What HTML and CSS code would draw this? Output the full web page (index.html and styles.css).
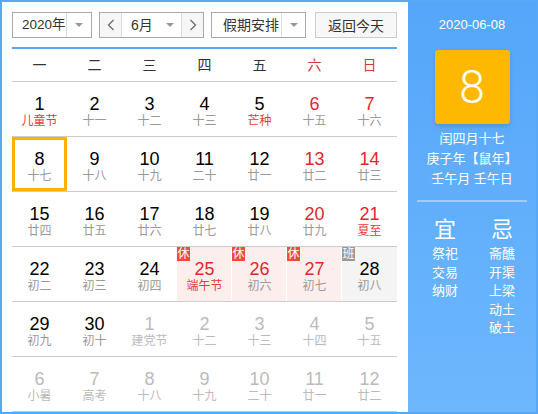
FILE: index.html
```html
<!DOCTYPE html>
<html lang="zh-CN">
<head>
<meta charset="utf-8">
<title>万年历</title>
<link rel="stylesheet" href="styles.css">
</head>
<body>
<div class="calendar">
  <div class="main">
    <div class="toolbar">
      <div class="select year">
        <span class="val">2020年</span>
        <span class="drop"><i class="arrow"></i></span>
      </div>
      <div class="select month">
        <span class="btn prev"><svg width="8" height="12" viewBox="0 0 8 12"><polyline points="6.5,1 1.5,6 6.5,11" fill="none" stroke="#666" stroke-width="1.2"/></svg></span>
        <span class="val">6月</span>
        <span class="mdrop"><i class="arrow"></i></span>
        <span class="btn next"><svg width="8" height="12" viewBox="0 0 8 12"><polyline points="1.5,1 6.5,6 1.5,11" fill="none" stroke="#666" stroke-width="1.2"/></svg></span>
      </div>
      <div class="select holiday">
        <span class="val">假期安排</span>
        <span class="drop"><i class="arrow"></i></span>
      </div>
      <button class="today">返回今天</button>
    </div>
    <div class="week">
      <span>一</span><span>二</span><span>三</span><span>四</span><span>五</span><span class="red">六</span><span class="red">日</span>
    </div>
    <div class="days">
      <div class="day"><b>1</b><em class="fest">儿童节</em></div>
      <div class="day"><b>2</b><em>十一</em></div>
      <div class="day"><b>3</b><em>十二</em></div>
      <div class="day"><b>4</b><em>十三</em></div>
      <div class="day"><b>5</b><em class="fest">芒种</em></div>
      <div class="day wkend"><b>6</b><em>十五</em></div>
      <div class="day wkend"><b>7</b><em>十六</em></div>

      <div class="day selected"><b>8</b><em>十七</em></div>
      <div class="day"><b>9</b><em>十八</em></div>
      <div class="day"><b>10</b><em>十九</em></div>
      <div class="day"><b>11</b><em>二十</em></div>
      <div class="day"><b>12</b><em>廿一</em></div>
      <div class="day wkend"><b>13</b><em>廿二</em></div>
      <div class="day wkend"><b>14</b><em>廿三</em></div>

      <div class="day"><b>15</b><em>廿四</em></div>
      <div class="day"><b>16</b><em>廿五</em></div>
      <div class="day"><b>17</b><em>廿六</em></div>
      <div class="day"><b>18</b><em>廿七</em></div>
      <div class="day"><b>19</b><em>廿八</em></div>
      <div class="day wkend"><b>20</b><em>廿九</em></div>
      <div class="day wkend"><b>21</b><em class="fest">夏至</em></div>

      <div class="day"><b>22</b><em>初二</em></div>
      <div class="day"><b>23</b><em>初三</em></div>
      <div class="day"><b>24</b><em>初四</em></div>
      <div class="day rest"><i class="badge">休</i><b>25</b><em class="fest">端午节</em></div>
      <div class="day rest"><i class="badge">休</i><b>26</b><em>初六</em></div>
      <div class="day rest"><i class="badge">休</i><b>27</b><em>初七</em></div>
      <div class="day work"><i class="badge">班</i><b>28</b><em>初八</em></div>

      <div class="day"><b>29</b><em>初九</em></div>
      <div class="day"><b>30</b><em>初十</em></div>
      <div class="day other"><b>1</b><em>建党节</em></div>
      <div class="day other"><b>2</b><em>十二</em></div>
      <div class="day other"><b>3</b><em>十三</em></div>
      <div class="day other"><b>4</b><em>十四</em></div>
      <div class="day other"><b>5</b><em>十五</em></div>

      <div class="day other"><b>6</b><em>小暑</em></div>
      <div class="day other"><b>7</b><em>高考</em></div>
      <div class="day other"><b>8</b><em>十八</em></div>
      <div class="day other"><b>9</b><em>十九</em></div>
      <div class="day other"><b>10</b><em>二十</em></div>
      <div class="day other"><b>11</b><em>廿一</em></div>
      <div class="day other"><b>12</b><em>廿二</em></div>
    </div>
  </div>
  <div class="side">
    <div class="date">2020-06-08</div>
    <div class="bigday">8</div>
    <div class="lunar">
      <div>闰四月十七</div>
      <div>庚子年【鼠年】</div>
      <div>壬午月 壬午日</div>
    </div>
    <div class="sep"></div>
    <div class="yiji">
      <div class="col">
        <div class="head">宜</div>
        <div>祭祀</div>
        <div>交易</div>
        <div>纳财</div>
      </div>
      <div class="col">
        <div class="head">忌</div>
        <div>斋醮</div>
        <div>开渠</div>
        <div>上梁</div>
        <div>动土</div>
        <div>破土</div>
      </div>
    </div>
  </div>
</div>
</body>
</html>
```
FILE: styles.css
```css
* { box-sizing: border-box; }
html, body { margin: 0; padding: 0; }
body {
  width: 538px;
  height: 414px;
  overflow: hidden;
  font-family: "Liberation Sans", "Noto Sans CJK SC", sans-serif;
  color: #333;
}
.calendar {
  display: flex;
  width: 538px;
  height: 414px;
  border: 2px solid #58a8f8;
  background: #fff;
  overflow: hidden;
}
.main {
  width: 406px;
  padding: 10px 11px 0 10px;
  overflow: hidden;
}
.toolbar {
  display: flex;
  height: 26px;
  margin-bottom: 9px;
}
.select {
  display: flex;
  height: 26px;
  border: 1px solid #aaa;
  background: #fff;
  font-size: 14px;
  line-height: 24px;
  color: #333;
  white-space: nowrap;
}
.select .val { flex: 1; padding-left: 10px; white-space: nowrap; overflow: hidden; }
.select .drop {
  display: flex;
  align-items: center;
  justify-content: center;
  flex: none;
  border-left: 1px solid #ddd;
}
.arrow {
  display: block;
  width: 0;
  height: 0;
  border-left: 4px solid transparent;
  border-right: 4px solid transparent;
  border-top: 4px solid #999;
}
.year { width: 80px; }
.year .val { padding-left: 9px; font-size: 13.5px; }
.year .drop { width: 25px; }
.month { width: 105px; margin-left: 7px; }
.month .btn {
  display: flex;
  align-items: center;
  justify-content: center;
  flex: none;
  width: 22px;
  background: #f6f6f6;
}
.month .prev { border-right: 1px solid #ddd; }
.month .next { border-left: 1px solid #ddd; }
.month .val { padding-left: 9px; }
.month .mdrop { display: flex; align-items: center; padding-right: 7px; }
.holiday { width: 95px; margin-left: 7px; }
.holiday .val { padding-left: 11px; }
.holiday .drop { width: 24px; }
.today {
  width: 82px;
  height: 26px;
  margin-left: 9px;
  padding: 0;
  border: 1px solid #ccc;
  background: #f7f7f7;
  font-family: "Liberation Sans", "Noto Sans CJK SC", sans-serif;
  font-size: 14px;
  color: #333;
}
.week {
  display: grid;
  grid-template-columns: repeat(7, 55px);
  border-top: 2px solid #58a8f8;
  border-bottom: 1px solid #ccc;
  height: 35px;
  font-size: 14px;
  line-height: 32px;
  text-align: center;
  color: #333;
}
.week .red { color: #e0333a; }
.days {
  display: grid;
  grid-template-columns: repeat(7, 55px);
  grid-auto-rows: 55px;
}
.day {
  position: relative;
  display: flex;
  flex-direction: column;
  align-items: center;
  padding-top: 12px;
  border-bottom: 1px solid #ccc;
}
.day b {
  font-weight: normal;
  font-size: 18px;
  line-height: 20px;
  color: #000;
}
.day em {
  font-style: normal;
  font-size: 12px;
  line-height: 14px;
  color: #999;
}
.day em.fest { color: #e63a3a; }
.day.wkend b { color: #e3262e; }
.day.rest { background: #fdeeee; box-shadow: inset -1px 0 0 #fff; }
.day.rest b { color: #e3262e; }
.day.work { background: #f4f4f4; }
.day.selected { box-shadow: inset 0 0 0 3px #fbb300; }
.day.other b, .day.other em { color: #bbb; }
.badge {
  position: absolute;
  top: 0;
  left: 0;
  width: 13px;
  height: 14px;
  font-style: normal;
  font-size: 12px;
  line-height: 14px;
  text-align: center;
  color: #fff;
  background: #f24b3c;
}
.work .badge { background: #999; }
.side {
  flex: 1;
  background: linear-gradient(#55a6fa, #6db7fd);
  color: #fff;
  text-align: center;
  padding-top: 14px;
}
.date { font-size: 13px; line-height: 18px; }
.bigday {
  width: 75px;
  height: 74px;
  margin: 16px auto 0;
  background: #ffb800;
  border-radius: 3px;
  box-shadow: 0 2px 4px rgba(0, 0, 0, 0.15);
  font-family: Roboto, "Liberation Sans", sans-serif;
  font-weight: 300;
  font-size: 46px;
  line-height: 74px;
  color: #fff;
}
.lunar { margin-top: 5px; font-size: 13px; line-height: 20px; }
.sep {
  width: 110px;
  height: 2px;
  margin: 11px auto 0;
  background: #9ccdfc;
}
.yiji {
  display: flex;
  justify-content: center;
  gap: 7px;
  padding-left: 3px;
  margin-top: 13px;
  font-size: 13px;
  line-height: 18.5px;
}
.yiji .col { width: 50px; }
.yiji .head { font-size: 22px; line-height: 30px; }
```
